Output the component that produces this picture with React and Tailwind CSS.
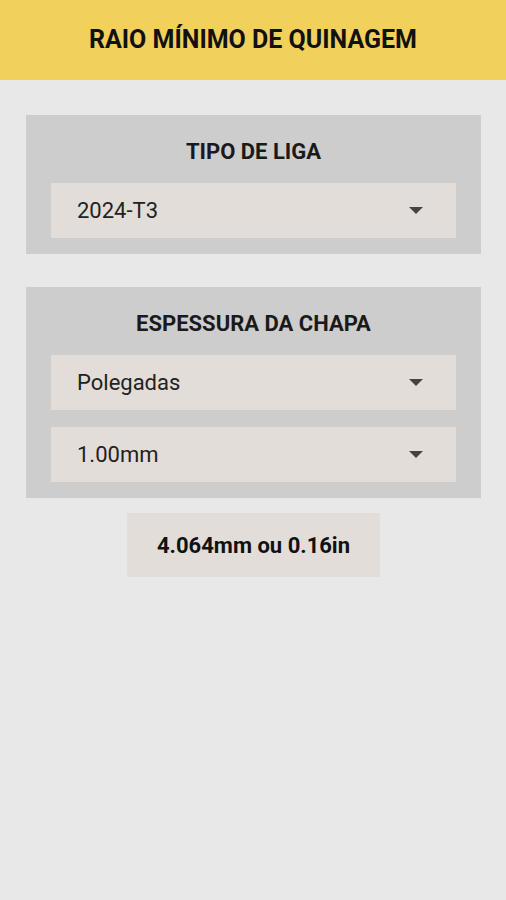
const Select = ({ value }) => {
	return (
		<div className="h-[55px] bg-[#e2ddd8] flex items-center justify-between pl-[26px] pr-[33px]">
			<span className="text-[22px] text-[#222]">{value}</span>
			<svg className="w-[14px] h-[7px]" viewBox="0 0 14 7">
				<path d="M0 0h14L7 7z" fill="#444" />
			</svg>
		</div>
	);
};

const Card = ({ title, children }) => {
	return (
		<div className="bg-[#cdcdcd] px-[25px] pb-[16px]">
			<h2 className="h-[68px] pt-[4px] flex items-center justify-center text-[22px] font-bold text-[#1a1a1a]">
				{title}
			</h2>
			<div className="flex flex-col gap-[17px]">{children}</div>
		</div>
	);
};

export default function App() {
	return (
		<div
			className="w-[506px] h-[900px] bg-[#e8e8e8] flex flex-col"
			style={{ fontFamily: "Roboto, 'Liberation Sans', sans-serif" }}
		>
			<header className="h-[80px] bg-[#f1d05b] flex items-center justify-center">
				<h1 className="text-[25px] font-bold text-[#111]">RAIO MÍNIMO DE QUINAGEM</h1>
			</header>
			<div className="pl-[26px] pr-[25px] pt-[35px] flex flex-col">
				<Card title="TIPO DE LIGA">
					<Select value="2024-T3" />
				</Card>
				<div className="mt-[33px]">
					<Card title="ESPESSURA DA CHAPA">
						<Select value="Polegadas" />
						<Select value="1.00mm" />
					</Card>
				</div>
				<div className="flex justify-center mt-[15px]">
					<div className="w-[253px] h-[64px] bg-[#e2ddd8] flex items-center justify-center text-[22px] font-bold text-[#111]">
						4.064mm ou 0.16in
					</div>
				</div>
			</div>
		</div>
	);
}
